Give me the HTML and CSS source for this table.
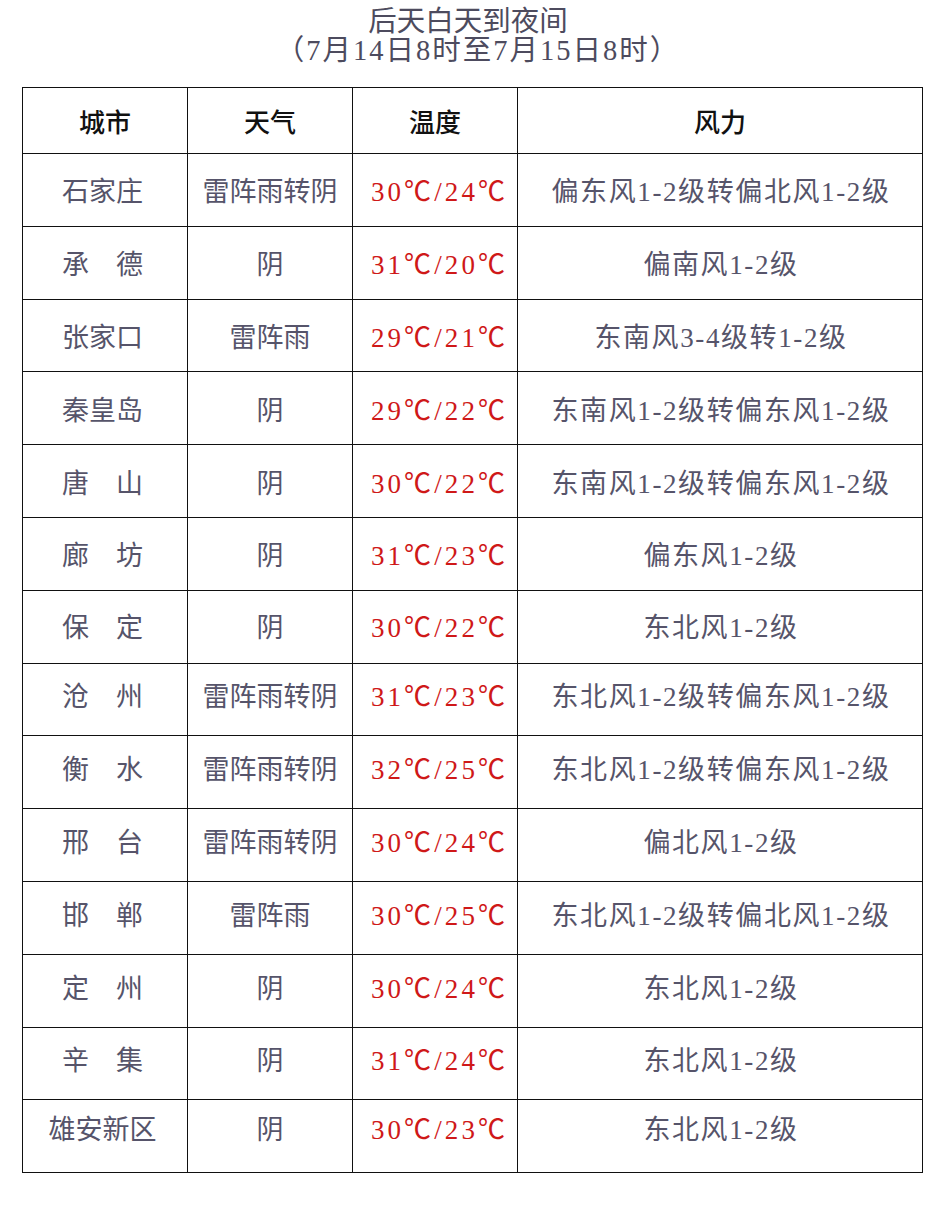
FILE: index.html
```html
<!DOCTYPE html>
<html lang="zh-CN">
<head>
<meta charset="utf-8">
<title>后天白天到夜间</title>
<link rel="stylesheet" href="styles.css">
</head>
<body>
<div class="page">
  <div class="title">
    <div class="title-line line-1">后天白天到夜间</div>
    <div class="title-line line-2">（7月14日8时至7月15日8时）</div>
  </div>
  <table class="forecast">
    <colgroup>
      <col class="c-city"><col class="c-weather"><col class="c-temp"><col class="c-wind">
    </colgroup>
    <thead>
      <tr><th>城市</th><th>天气</th><th>温度</th><th>风力</th></tr>
    </thead>
    <tbody>
      <tr><td class="city">石家庄</td><td>雷阵雨转阴</td><td class="temp">30℃/24℃</td><td class="wind">偏东风1-2级转偏北风1-2级</td></tr>
      <tr><td class="city">承　德</td><td>阴</td><td class="temp">31℃/20℃</td><td class="wind">偏南风1-2级</td></tr>
      <tr><td class="city">张家口</td><td>雷阵雨</td><td class="temp">29℃/21℃</td><td class="wind">东南风3-4级转1-2级</td></tr>
      <tr><td class="city">秦皇岛</td><td>阴</td><td class="temp">29℃/22℃</td><td class="wind">东南风1-2级转偏东风1-2级</td></tr>
      <tr><td class="city">唐　山</td><td>阴</td><td class="temp">30℃/22℃</td><td class="wind">东南风1-2级转偏东风1-2级</td></tr>
      <tr><td class="city">廊　坊</td><td>阴</td><td class="temp">31℃/23℃</td><td class="wind">偏东风1-2级</td></tr>
      <tr class="up-1"><td class="city">保　定</td><td>阴</td><td class="temp">30℃/22℃</td><td class="wind">东北风1-2级</td></tr>
      <tr class="up-2"><td class="city">沧　州</td><td>雷阵雨转阴</td><td class="temp">31℃/23℃</td><td class="wind">东北风1-2级转偏东风1-2级</td></tr>
      <tr class="up-2"><td class="city">衡　水</td><td>雷阵雨转阴</td><td class="temp">32℃/25℃</td><td class="wind">东北风1-2级转偏东风1-2级</td></tr>
      <tr class="up-2"><td class="city">邢　台</td><td>雷阵雨转阴</td><td class="temp">30℃/24℃</td><td class="wind">偏北风1-2级</td></tr>
      <tr class="up-2"><td class="city">邯　郸</td><td>雷阵雨</td><td class="temp">30℃/25℃</td><td class="wind">东北风1-2级转偏北风1-2级</td></tr>
      <tr class="up-2"><td class="city">定　州</td><td>阴</td><td class="temp">30℃/24℃</td><td class="wind">东北风1-2级</td></tr>
      <tr class="up-2"><td class="city">辛　集</td><td>阴</td><td class="temp">31℃/24℃</td><td class="wind">东北风1-2级</td></tr>
      <tr class="up-3"><td class="city">雄安新区</td><td>阴</td><td class="temp">30℃/23℃</td><td class="wind">东北风1-2级</td></tr>
    </tbody>
  </table>
</div>
</body>
</html>
```
FILE: styles.css
```css
html, body {
  margin: 0;
  padding: 0;
  background: #ffffff;
}

body {
  font-family: "Liberation Serif", "Noto Sans CJK SC", serif;
  color: #56546a;
  text-spacing-trim: space-all;
}

.page {
  width: 942px;
  padding-top: 7px;
}

.title {
  text-align: center;
  color: #4d4b5e;
  font-size: 28.5px;
  line-height: 29px;
  margin-bottom: 22px;
}

.title .line-1 {
  padding-right: 6px;
}

.title .line-2 {
  letter-spacing: 2px;
  padding-left: 14px;
}

.forecast {
  margin-left: 22px;
  width: 900px;
  border-collapse: collapse;
  table-layout: fixed;
}

.c-city, .c-weather, .c-temp { width: 165px; }
.c-wind { width: 405px; }

.forecast th,
.forecast td {
  border: 1.5px solid #111111;
  text-align: center;
  vertical-align: middle;
  padding: 0;
  font-size: 27px;
  white-space: nowrap;
  box-sizing: border-box;
}

.forecast th {
  height: 66px;
  color: #111111;
  font-weight: 500;
  font-size: 26px;
}

.forecast td {
  height: 72.8px;
}

.forecast .up-1 td { padding-bottom: 3px; }
.forecast .up-2 td { padding-bottom: 9px; }
.forecast .up-3 td { padding-bottom: 17px; }

.forecast td.city {
  padding-right: 5px;
}

.forecast td.temp {
  color: #cf1818;
  letter-spacing: 3.1px;
  padding-left: 9px;
}

.forecast td.wind {
  letter-spacing: 1.6px;
  padding-left: 2px;
}
```
